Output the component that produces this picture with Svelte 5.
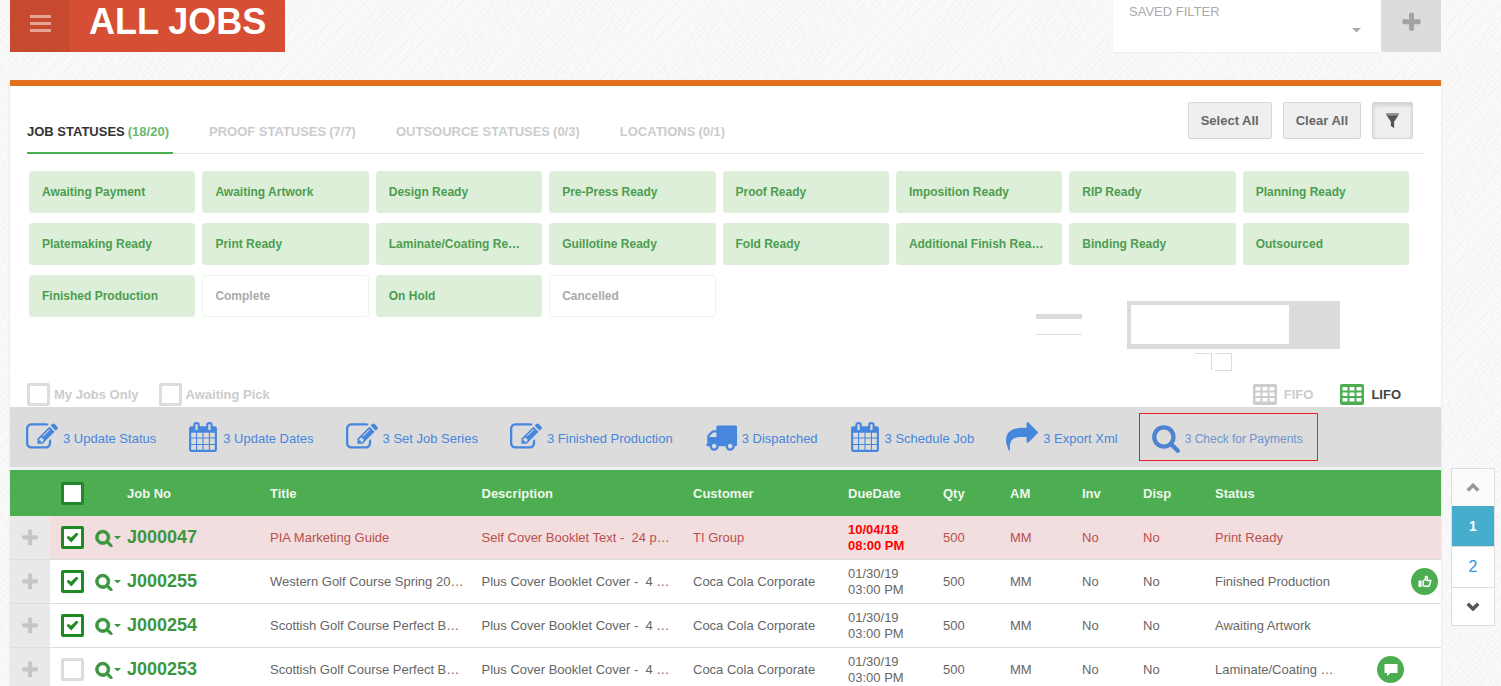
<script>
  const tabs = [
    { name: 'JOB STATUSES', count: '(18/20)' },
    { name: 'PROOF STATUSES', count: '(7/7)' },
    { name: 'OUTSOURCE STATUSES', count: '(0/3)' },
    { name: 'LOCATIONS', count: '(0/1)' },
  ];

  let activeTab = 0;
  let order = 'LIFO';
  let page = 1;

  let statuses = [
    'Awaiting Payment',
    'Awaiting Artwork',
    'Design Ready',
    'Pre-Press Ready',
    'Proof Ready',
    'Imposition Ready',
    'RIP Ready',
    'Planning Ready',
    'Platemaking Ready',
    'Print Ready',
    'Laminate/Coating Re…',
    'Guillotine Ready',
    'Fold Ready',
    'Additional Finish Rea…',
    'Binding Ready',
    'Outsourced',
    'Finished Production',
    'Complete',
    'On Hold',
    'Cancelled',
  ].map((name) => ({ name, on: name !== 'Complete' && name !== 'Cancelled' }));

  const actions = [
    { icon: 'edit', text: '3 Update Status' },
    { icon: 'calendar', text: '3 Update Dates' },
    { icon: 'edit', text: '3 Set Job Series' },
    { icon: 'edit', text: '3 Finished Production' },
    { icon: 'truck', text: '3 Dispatched' },
    { icon: 'calendar', text: '3 Schedule Job' },
    { icon: 'share', text: '3 Export Xml' },
    { icon: 'search', text: '3 Check for Payments', marked: true },
  ];

  let jobs = [
    {
      no: 'J000047',
      title: 'PIA Marketing Guide',
      desc: 'Self Cover Booklet Text -  24 p…',
      customer: 'TI Group',
      date: '10/04/18',
      time: '08:00 PM',
      status: 'Print Ready',
      checked: true,
      late: true,
    },
    {
      no: 'J000255',
      title: 'Western Golf Course Spring 20…',
      desc: 'Plus Cover Booklet Cover -  4 …',
      customer: 'Coca Cola Corporate',
      date: '01/30/19',
      time: '03:00 PM',
      status: 'Finished Production',
      checked: true,
      approved: true,
    },
    {
      no: 'J000254',
      title: 'Scottish Golf Course Perfect B…',
      desc: 'Plus Cover Booklet Cover -  4 …',
      customer: 'Coca Cola Corporate',
      date: '01/30/19',
      time: '03:00 PM',
      status: 'Awaiting Artwork',
      checked: true,
    },
    {
      no: 'J000253',
      title: 'Scottish Golf Course Perfect B…',
      desc: 'Plus Cover Booklet Cover -  4 …',
      customer: 'Coca Cola Corporate',
      date: '01/30/19',
      time: '03:00 PM',
      status: 'Laminate/Coating …',
      checked: false,
      comment: true,
    },
  ];

  const paths = {
    edit: 'M888 1184l116-116-152-152-116 116v56h96v96h56zm440-720q-16-16-33 1l-350 350q-17 17-1 33t33-1l350-350q17-17 1-33zm80 594v190q0 119-84.5 203.5t-203.5 84.5h-832q-119 0-203.5-84.5t-84.5-203.5v-832q0-119 84.5-203.5t203.5-84.5h832q63 0 117 25 15 7 18 23 3 17-9 29l-49 49q-14 14-32 8-23-6-45-6h-832q-66 0-113 47t-47 113v832q0 66 47 113t113 47h832q66 0 113-47t47-113v-126q0-13 9-22l64-64q15-15 35-7t20 29zm-96-738l288 288-672 672h-288v-288zm444 132l-92 92-288-288 92-92q28-28 68-28t68 28l152 152q28 28 28 68t-28 68z',
    calendar:
      'M192 1664h288v-288h-288v288zm352 0h320v-288h-320v288zm-352-352h288v-320h-288v320zm352 0h320v-320h-320v320zm-352-384h288v-288h-288v288zm736 736h320v-288h-320v288zm-384-736h320v-288h-320v288zm768 736h288v-288h-288v288zm-384-352h320v-320h-320v320zm-352-864v-288q0-13-9.5-22.5t-22.5-9.5h-64q-13 0-22.5 9.5t-9.5 22.5v288q0 13 9.5 22.5t22.5 9.5h64q13 0 22.5-9.5t9.5-22.5zm736 864h288v-320h-288v320zm-384-384h320v-288h-320v288zm384 0h288v-288h-288v288zm32-480v-288q0-13-9.5-22.5t-22.5-9.5h-64q-13 0-22.5 9.5t-9.5 22.5v288q0 13 9.5 22.5t22.5 9.5h64q13 0 22.5-9.5t9.5-22.5zm384-64v1280q0 52-38 90t-90 38h-1408q-52 0-90-38t-38-90v-1280q0-52 38-90t90-38h128v-96q0-66 47-113t113-47h64q66 0 113 47t47 113v96h384v-96q0-66 47-113t113-47h64q66 0 113 47t47 113v96h128q52 0 90 38t38 90z',
    truck:
      'M640 1408q0-52-38-90t-90-38-90 38-38 90 38 90 90 38 90-38 38-90zm-384-512h384v-256h-158q-13 0-22 9l-195 195q-9 9-9 22v30zm1280 512q0-52-38-90t-90-38-90 38-38 90 38 90 90 38 90-38 38-90zm256-1088v1024q0 15-4 26.5t-13.5 18.5-16.5 11.5-23.5 6-22.5 2-25.5 0-22.5-.5q0 106-75 181t-181 75-181-75-75-181h-384q0 106-75 181t-181 75-181-75-75-181h-64q-3 0-22.5.5t-25.5 0-22.5-2-23.5-6-16.5-11.5-13.5-18.5-4-26.5q0-26 19-45t45-19v-320q0-8-.5-35t0-38 2.5-34.5 6.5-37 14-30.5 22.5-30l198-198q19-19 50.5-32t58.5-13h160v-192q0-26 19-45t45-19h1024q26 0 45 19t19 45z',
    share:
      'M1792 640q0 26-19 45l-512 512q-19 19-45 19t-45-19-19-45v-256h-224q-98 0-175.5 6t-154 21.5-133 42.5-105.5 69.5-80 101-48.5 138.5-17.5 181q0 55 5 123 0 6 2.5 23.5t2.5 26.5q0 15-8.5 25t-23.5 10q-16 0-28-17-7-9-13-22t-13.5-30-10.5-24q-127-285-127-451 0-199 53-333 162-403 875-403h224v-256q0-26 19-45t45-19 45 19l512 512q19 19 19 45z',
    search:
      'M1216 832q0-185-131.5-316.5t-316.5-131.5-316.5 131.5-131.5 316.5 131.5 316.5 316.5 131.5 316.5-131.5 131.5-316.5zm512 832q0 52-38 90t-90 38q-54 0-90-38l-343-342q-179 124-399 124-143 0-273.5-55.5t-225-150-150-225-55.5-273.5 55.5-273.5 150-225 225-150 273.5-55.5 273.5 55.5 225 150 150 225 55.5 273.5q0 220-124 399l343 343q37 37 37 90z',
    plus: 'M1600 736v192q0 40-28 68t-68 28h-416v416q0 40-28 68t-68 28h-192q-40 0-68-28t-28-68v-416h-416q-40 0-68-28t-28-68v-192q0-40 28-68t68-28h416v-416q0-40 28-68t68-28h192q40 0 68 28t28 68v416h416q40 0 68 28t28 68z',
  };

  const setAll = (on) => {
    statuses = statuses.map((s) => ({ ...s, on }));
  };
</script>

{#snippet icon(name)}
  <svg class="icon {name}" viewBox="0 0 1792 1792" aria-hidden="true">
    <path d={paths[name]} />
  </svg>
{/snippet}

{#snippet grid()}
  <svg class="grid-icon" viewBox="0 0 24 21" aria-hidden="true">
    <path
      fill-rule="evenodd"
      d="M2 0h20a2 2 0 0 1 2 2v17a2 2 0 0 1-2 2H2a2 2 0 0 1-2-2V2a2 2 0 0 1 2-2zM2.500 3v3.500h5V3zM9.500 3v3.500h5V3zM16.500 3v3.500h5V3zM2.500 8.500v3.500h5V8.500zM9.500 8.500v3.500h5V8.500zM16.500 8.500v3.500h5V8.500zM2.500 14v3.500h5V14zM9.500 14v3.500h5V14zM16.500 14v3.500h5V14z"
    />
  </svg>
{/snippet}

<div class="page">
  <header>
    <button class="burger" aria-label="Menu"><i></i><i></i><i></i></button>
    <h1>ALL JOBS</h1>
    <div class="saved">
      <label for="saved-filter">SAVED FILTER</label>
      <select id="saved-filter"><option></option></select>
      <svg class="caret" viewBox="0 0 8 4" aria-hidden="true"><path d="M0 0h8L4 4z" /></svg>
    </div>
    <button class="add" aria-label="Add filter">{@render icon('plus')}</button>
  </header>

  <div class="columns">
    <main>
      <div class="tab-bar">
        <nav>
          {#each tabs as tab, i}
            <button class="tab" class:active={activeTab === i} on:click={() => (activeTab = i)}>
              {tab.name}<span>{tab.count}</span>
            </button>
          {/each}
        </nav>
        <div class="tools">
          <button class="btn" on:click={() => setAll(true)}>Select All</button>
          <button class="btn" on:click={() => setAll(false)}>Clear All</button>
          <button class="btn pressed" aria-label="Toggle filters">
            <svg viewBox="0 0 12 14" aria-hidden="true">
              <path d="M0 0h12v2H0z" opacity=".6" />
              <path d="M0.500 2h11L7.500 8v6l-3-2V8z" />
            </svg>
          </button>
        </div>
      </div>

      <div class="chips">
        {#each statuses as s}
          <button class="chip" class:on={s.on} on:click={() => (s.on = !s.on)}>{s.name}</button>
        {/each}
      </div>

      <div class="finder">
        <div class="rules"></div>
        <div class="finder-body">
          <div class="search-box">
            <input type="text" aria-label="Search jobs" />
          </div>
          <div class="corners"><i></i><i></i></div>
        </div>
      </div>

      <div class="options">
        <label><input type="checkbox" />My Jobs Only</label>
        <label><input type="checkbox" />Awaiting Pick</label>
        <div class="order">
          {#each ['FIFO', 'LIFO'] as o}
            <button class:active={order === o} on:click={() => (order = o)}>
              {@render grid()}{o}
            </button>
          {/each}
        </div>
      </div>

      <div class="actions">
        {#each actions as a}
          <button class:marked={a.marked}>{@render icon(a.icon)}{a.text}</button>
        {/each}
      </div>

      <table>
        <colgroup>
          <col class="c-plus" />
          <col class="c-check" />
          <col class="c-view" />
          <col class="c-no" />
          <col />
          <col />
          <col class="c-customer" />
          <col class="c-due" />
          <col class="c-qty" />
          <col class="c-am" />
          <col class="c-inv" />
          <col class="c-disp" />
          <col class="c-status" />
          <col class="c-flag" />
          <col class="c-flag" />
        </colgroup>
        <thead>
          <tr>
            <th></th>
            <th><input type="checkbox" aria-label="Select all jobs" /></th>
            <th></th>
            <th>Job No</th>
            <th>Title</th>
            <th>Description</th>
            <th>Customer</th>
            <th>DueDate</th>
            <th>Qty</th>
            <th>AM</th>
            <th>Inv</th>
            <th>Disp</th>
            <th>Status</th>
            <th></th>
            <th></th>
          </tr>
        </thead>
        <tbody>
          {#each jobs as job}
            <tr class:late={job.late}>
              <td class="expand">
                <button aria-label="Expand {job.no}">{@render icon('plus')}</button>
              </td>
              <td><input type="checkbox" aria-label="Select {job.no}" bind:checked={job.checked} /></td>
              <td>
                <button class="view" aria-label="View {job.no}">
                  {@render icon('search')}
                  <svg class="caret" viewBox="0 0 8 4" aria-hidden="true"><path d="M0 0h8L4 4z" /></svg>
                </button>
              </td>
              <td><a class="no" href="#{job.no}">{job.no}</a></td>
              <td>{job.title}</td>
              <td>{job.desc}</td>
              <td>{job.customer}</td>
              <td class="due">{job.date}<br />{job.time}</td>
              <td>500</td>
              <td>MM</td>
              <td>No</td>
              <td>No</td>
              <td>{job.status}</td>
              <td>
                {#if job.comment}
                  <span class="flag">
                    <svg viewBox="0 0 16 16" aria-hidden="true">
                      <path class="solid" d="M1.500 2h13v9H7.500L4 14v-3H1.500z" />
                    </svg>
                  </span>
                {/if}
              </td>
              <td>
                {#if job.approved}
                  <span class="flag">
                    <svg viewBox="0 0 16 16" aria-hidden="true">
                      <path class="solid" d="M1.500 6.500h3v6.500h-3z" />
                      <path
                        class="line"
                        d="M6 7.500L8.500 5V2.500Q10.500 2 10.500 4L9.800 6.500h4L13 9.500L12 12.300H7.500L6 11.500z"
                      />
                    </svg>
                  </span>
                {/if}
              </td>
            </tr>
          {/each}
        </tbody>
      </table>
    </main>

    <nav class="pager">
      <button class="up" aria-label="Previous page" on:click={() => (page = 1)}>
        <svg viewBox="0 0 12 8" aria-hidden="true"><path d="M1.500 6.500L6 2l4.500 4.500" /></svg>
      </button>
      {#each [1, 2] as n}
        <button class="num" class:active={page === n} on:click={() => (page = n)}>{n}</button>
      {/each}
      <button class="down" aria-label="Next page" on:click={() => (page = 2)}>
        <svg viewBox="0 0 12 8" aria-hidden="true"><path d="M1.500 1.500L6 6l4.500-4.500" /></svg>
      </button>
    </nav>
  </div>
</div>

<style>
  :global(body) {
    background-color: #fafafa;
    background-image: repeating-linear-gradient(135deg, #f4f4f4 0 1px, transparent 1px 4px),
      repeating-linear-gradient(120deg, #f7f7f7 0 2px, transparent 2px 7px);
    font-family: 'Liberation Sans', Arial, sans-serif;
    font-size: 13px;
    color: #666;
  }

  button,
  input,
  select {
    font: inherit;
    color: inherit;
    margin: 0;
    padding: 0;
    border: 0;
    background: none;
  }

  button {
    cursor: pointer;
  }

  svg {
    display: block;
    fill: currentColor;
  }

  .page {
    height: 100vh;
    padding-left: 10px;
    overflow: hidden;
    box-sizing: border-box;
  }

  header {
    display: flex;
    height: 52px;
    margin: 0 60px 28px 0;
  }

  .burger {
    width: 60px;
    padding-bottom: 6px;
    background: #c74930;
    display: flex;
    flex-direction: column;
    align-items: center;
    justify-content: center;
    gap: 4px;
  }

  .burger i {
    width: 21px;
    height: 3px;
    background: #e6a497;
  }

  h1 {
    margin: 0;
    padding: 0 19px;
    background: #d64f34;
    color: #fff;
    font-size: 36px;
    line-height: 44px;
  }

  .saved {
    position: relative;
    width: 268px;
    margin-left: auto;
    background: #fff;
    color: #aaa;
    box-shadow: 0 1px 1px #eee;
  }

  .saved label {
    display: block;
    padding: 4px 16px 0;
    line-height: 16px;
  }

  .saved select {
    width: 100%;
    height: 28px;
    appearance: none;
  }

  .saved .caret {
    position: absolute;
    right: 20px;
    top: 28px;
    width: 9px;
  }

  .add {
    width: 60px;
    padding-bottom: 8px;
    background: #dcdcdc;
    color: #a3a3a3;
  }

  .add .icon {
    width: 23px;
    margin: 0 auto;
  }

  .columns {
    display: grid;
    grid-template-columns: minmax(0, 1fr) 60px;
  }

  main {
    border-top: 6px solid #e2711d;
    background: #fff;
    box-shadow: 0 1px 2px #ddd;
  }

  .tab-bar {
    display: flex;
    justify-content: space-between;
    height: 67px;
    margin: 0 17px;
    border-bottom: 1px solid #e9e9e9;
  }

  nav {
    display: flex;
    gap: 36px;
  }

  .tab {
    height: 68px;
    padding-top: 24px;
    border-bottom: 2px solid transparent;
    font-weight: bold;
    color: #ccc;
  }

  .tab span {
    padding: 0 4px 0 3px;
  }

  .tab.active {
    border-color: #4cae50;
    color: #333;
  }

  .tab.active span {
    color: #6ab86c;
  }

  .tools {
    display: flex;
    gap: 11px;
    padding: 16px 11px 0 0;
  }

  .btn {
    height: 37px;
    padding: 0 12px;
    border: 1px solid #d6d6d6;
    border-radius: 2px;
    background: #efefef;
    color: #666;
    font-weight: bold;
  }

  .btn.pressed {
    padding: 0 13px;
    box-shadow: inset 0 2px 4px #ccc;
    color: #555;
  }

  .btn svg {
    width: 13px;
  }

  .chips {
    display: grid;
    grid-template-columns: repeat(8, minmax(0, 1fr));
    grid-auto-rows: 42px;
    gap: 10px 7px;
    margin: 17px 32px 0 19px;
  }

  .chip {
    padding: 0 12px;
    border: 1px solid #edf6eb;
    border-radius: 3px;
    background: #fff;
    color: #aaa;
    font-size: 12px;
    font-weight: bold;
    text-align: left;
    white-space: nowrap;
  }

  .chip.on {
    border-color: #ddefd8;
    background: #ddefd8;
    color: #4d9d50;
  }

  /* sits beside the short last row of chips */
  .finder {
    display: flex;
    justify-content: flex-end;
    gap: 45px;
    height: 80px;
    margin: -16px 101px 0 auto;
    width: fit-content;
  }

  .rules {
    width: 46px;
    height: 15px;
    margin-top: 13px;
    border-top: 5px solid #dcdcdc;
    border-bottom: 1px solid #dcdcdc;
  }

  .search-box {
    width: 213px;
    height: 48px;
    padding: 4px;
    box-sizing: border-box;
    background: #dcdcdc;
  }

  .search-box input {
    display: block;
    width: 158px;
    height: 39px;
    background: #fff;
  }

  .corners {
    display: flex;
    gap: 3px;
    padding: 4px 0 0 68px;
  }

  .corners i {
    width: 16px;
    height: 16px;
    border: 1px solid #dcdcdc;
    border-left: 0;
  }

  .corners i:first-child {
    border-bottom: 0;
  }

  .options {
    display: flex;
    align-items: center;
    gap: 20px;
    height: 26px;
    padding: 0 40px 0 17px;
    color: #ccc;
    font-weight: bold;
  }

  .options label {
    display: flex;
    align-items: center;
    gap: 4px;
  }

  input[type='checkbox'] {
    appearance: none;
    display: grid;
    place-items: center;
    width: 23px;
    height: 23px;
    box-sizing: border-box;
    border: 3px solid #dcdcdc;
    border-radius: 2px;
    background: #fff;
  }

  input[type='checkbox']:checked {
    border-color: #1e8a22;
  }

  input[type='checkbox']:checked::before {
    content: '';
    width: 12px;
    height: 10px;
    background: #1e8a22;
    clip-path: polygon(0 50%, 16% 32%, 38% 52%, 82% 0, 100% 18%, 40% 100%);
  }

  th input[type='checkbox'] {
    border-color: #23862a;
  }

  .order {
    display: flex;
    gap: 27px;
    margin-left: auto;
  }

  .order button {
    display: flex;
    align-items: center;
    gap: 7px;
    font-weight: bold;
  }

  .order .active {
    color: #444;
  }

  .grid-icon {
    width: 24px;
  }

  .active .grid-icon {
    color: #4cae50;
  }

  .actions {
    display: flex;
    align-items: center;
    gap: 32px;
    height: 60px;
    padding-left: 16px;
    background: #dcdcdc;
    color: #4686dd;
    border-bottom: 3px solid #f3f3f3;
  }

  .actions button {
    display: flex;
    align-items: center;
    gap: 5px;
    padding-top: 2px;
    white-space: nowrap;
  }

  .actions .icon {
    width: 32px;
    margin-top: -2px;
  }

  .actions .calendar,
  .actions .search {
    width: 30px;
  }

  .actions .marked {
    gap: 4px;
    height: 48px;
    margin-left: -11px;
    padding: 4px 14px 0 11px;
    box-sizing: border-box;
    border: 1px solid #ee1c25;
    color: #6d93d0;
    font-size: 12px;
  }

  .marked .icon {
    color: #4d84cf;
  }

  table {
    width: 100%;
    table-layout: fixed;
    border-collapse: collapse;
  }

  .c-plus {
    width: 40px;
  }
  .c-check {
    width: 45px;
  }
  .c-view {
    width: 32px;
  }
  .c-no {
    width: 143px;
  }
  .c-customer {
    width: 155px;
  }
  .c-due {
    width: 95px;
  }
  .c-qty {
    width: 67px;
  }
  .c-am {
    width: 72px;
  }
  .c-inv {
    width: 61px;
  }
  .c-disp {
    width: 72px;
  }
  .c-status {
    width: 158px;
  }
  .c-flag {
    width: 34px;
  }

  th {
    height: 46px;
    padding: 0;
    background: #4cae50;
    color: #eef7ee;
    text-align: left;
  }

  th input,
  td input {
    margin-left: 11px;
  }

  td {
    height: 43px;
    padding: 0;
    border-bottom: 1px solid #ddd;
    line-height: 16px;
    white-space: pre;
  }

  .late td {
    background: #f2dede;
    color: #b9504e;
  }

  .late .due {
    color: #f00;
    font-weight: bold;
  }

  td.expand,
  .late td.expand {
    background: #e9e9e9;
    color: #c6c6c6;
  }

  .expand button {
    display: block;
    margin: 0 auto;
  }

  .expand .icon {
    width: 20px;
  }

  .view {
    display: flex;
    align-items: center;
    gap: 1px;
    color: #3c9640;
  }

  .view .icon {
    width: 18px;
    stroke: currentColor;
    stroke-width: 90;
  }

  .view .caret {
    width: 7px;
  }

  .no {
    color: #3c9640;
    font-size: 18px;
    font-weight: bold;
    text-decoration: none;
  }

  .flag {
    display: grid;
    place-items: center;
    width: 27px;
    height: 27px;
    margin-left: 4px;
    border-radius: 50%;
    background: #4cae50;
    color: #fff;
  }

  .flag svg {
    width: 16px;
  }

  .flag .line {
    fill: none;
    stroke: currentColor;
    stroke-width: 1.5;
    stroke-linejoin: round;
  }

  .pager {
    flex-direction: column;
    gap: 0;
    width: 44px;
    margin: 388px 0 0 10px;
    align-self: start;
    border: 1px solid #ddd;
    box-sizing: border-box;
    background: #fff;
  }

  .pager button {
    height: 37px;
  }

  .pager .num {
    height: 41px;
    border-bottom: 1px solid #ddd;
    color: #3598d4;
    font-size: 16px;
  }

  .pager .num.active {
    background: #47adcd;
    color: #fff;
    font-size: 14px;
    font-weight: bold;
  }

  .pager svg {
    width: 14px;
    margin: 0 auto;
    fill: none;
    stroke: #555;
    stroke-width: 3;
  }

  .pager .up {
    background: #fbfbfb;
  }

  .pager .up svg {
    stroke: #999;
  }
</style>
